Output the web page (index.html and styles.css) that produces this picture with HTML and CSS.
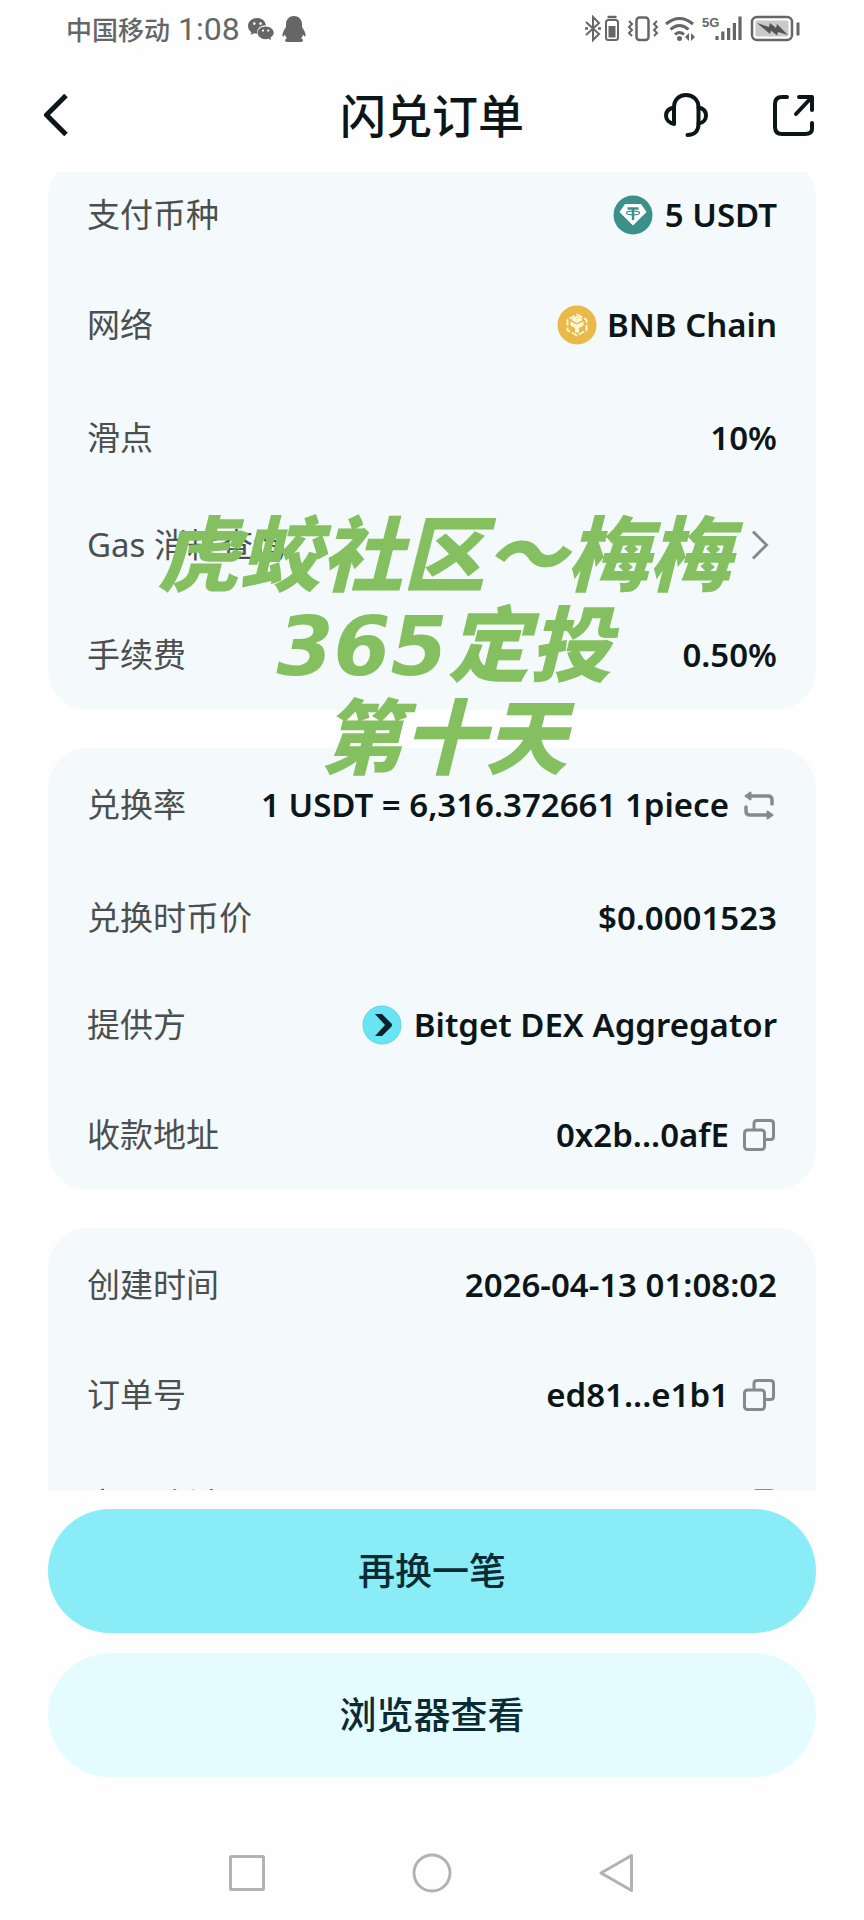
FILE: index.html
```html
<!DOCTYPE html>
<html lang="zh-CN">
<head>
<meta charset="utf-8">
<meta name="viewport" content="width=device-width, initial-scale=1">
<title>闪兑订单</title>
<link rel="stylesheet" href="styles.css">
</head>
<body>
<svg class="sprite" aria-hidden="true">
  <symbol id="copy" viewBox="0 0 32 32">
    <g fill="none" stroke="currentColor" stroke-width="3">
      <rect x="1.5" y="11" width="20" height="19.5" rx="3"/>
      <path d="M11 11V4.500q0-3 3-3h13.500q3 0 3 3v13q0 3-3 3h-6"/>
    </g>
  </symbol>
</svg>
<div class="screen">
  <div class="status">
    <div class="status-side">
      <span class="carrier">中国移动</span>
      <span class="clock">1:08</span>
      <svg class="wechat" width="26" height="22" viewBox="0 0 26 22">
        <path fill="#666" d="M9.500 0C4.200 0 0 3.600 0 8c0 2.500 1.300 4.700 3.400 6.200L2.600 17l3.300-1.700c1.100.3 2 .5 3.300.5-.9-4.700 3-8.600 8.800-8.600C17.200 3 13.700 0 9.500 0z"/>
        <path fill="#666" d="M17.600 8.400c-4.600 0-8 2.900-8 6.400s3.400 6.400 8 6.400c1 0 1.900-.1 2.800-.4l2.600 1.200-.6-2.300c2-1.300 3.300-3 3.300-4.900 0-3.500-3.500-6.400-8.100-6.400z"/>
        <g fill="#fff"><circle cx="6.300" cy="5.600" r="1.300"/><circle cx="12.500" cy="5.600" r="1.300"/><circle cx="15" cy="12.600" r="1.100"/><circle cx="20.200" cy="12.600" r="1.100"/></g>
      </svg>
      <svg class="qq" width="24" height="26" viewBox="0 0 24 26">
        <path fill="#666" d="M12 0c4.500 0 8 3.400 8 8v3c1.800 2.600 3.600 5.800 3.600 8.400 0 1.600-1 1.400-2.600-1-.4 1.700-1 2.800-2 3.900 1.300.7 2 1.300 2 2.100 0 1.200-1.800 1.600-4.400 1.600H7.400C4.800 26 3 25.600 3 24.400c0-.8.700-1.400 2-2.100-1-1.100-1.600-2.200-2-3.900-1.600 2.400-2.600 2.600-2.600 1C.4 16.800 2.200 13.600 4 11V8c0-4.600 3.500-8 8-8z"/>
      </svg>
    </div>
    <svg class="status-icons" width="216" height="28" viewBox="0 0 216 28" fill="none" stroke="#666" stroke-width="2">
      <path d="M2 7l13 12-6 6V2l6 6L2 20"/>
      <path d="M1 13.500h3M14 13.500h3" stroke-width="2.500"/>
      <rect x="22" y="5" width="12" height="20" rx="2.500"/>
      <path d="M23.500 2h9" stroke-width="2.500"/>
      <rect x="24.500" y="11" width="7" height="11.500" fill="#666" stroke="none"/>
      <rect x="52.500" y="2.500" width="12" height="22.500" rx="3" stroke-width="2.500"/>
      <path d="M45 6l3 3-3 3 3 3-3 3 3 3M73 6l-3 3 3 3-3 3 3 3-3 3"/>
      <g stroke-width="3"><path d="M82 9q13.500-11 27 0M86.500 14.500q9-8 18 0M91 19.500q4.500-4 9 0"/></g>
      <circle cx="95.500" cy="23.500" r="2.500" fill="#666" stroke="none"/>
      <path d="M105 18l-4 4 4 4zM107 18l4 4-4 4z" fill="#666" stroke="none"/>
      <text class="net" x="118" y="12">5G</text>
      <g stroke-width="3.200"><path d="M133 25v-4M138.800 25v-8.500M144.600 25V13M150.400 25V8M156 25V1.500"/></g>
      <rect x="168" y="2" width="40" height="23" rx="5" stroke-width="2.500"/>
      <rect x="171.500" y="5.500" width="33" height="16" rx="2" fill="#c9c9c9" stroke="none"/>
      <path d="M173 8l12 4 1-4 6 5 1-4 11 11-10-3-1 3.500-6-5-1 3.500z" fill="#555" stroke="none"/>
      <path d="M214 7.500v13" stroke-width="3"/>
    </svg>
  </div>
  <header class="header">
    <button class="icon-button" type="button" aria-label="返回">
      <svg width="24" height="42" viewBox="0 0 24 42" fill="none" stroke="#0c1618" stroke-width="5"><path d="M22 1.500L2.500 21 22 40.500"/></svg>
    </button>
    <h1 class="title">闪兑订单</h1>
    <div class="header-actions">
      <button class="icon-button" type="button" aria-label="客服">
        <svg width="44" height="44" viewBox="0 0 44 44" fill="none" stroke="#0c1618" stroke-width="4" stroke-linecap="round" stroke-linejoin="round"><path d="M10 31V14.500C10 7 15 2 22 2s12.500 5 12.500 12.500V31c0 7-4 11-11 11"/><path d="M10 14.500C5 15.500 2 18.500 2 22.500s3 7.500 8 8M34.500 14.500c5 1 7.500 4 7.500 8s-2.500 7.500-7.500 8"/></svg>
      </button>
      <button class="icon-button" type="button" aria-label="分享">
        <svg width="42" height="42" viewBox="0 0 42 42" fill="none" stroke="#0c1618" stroke-width="4" stroke-linecap="round" stroke-linejoin="round"><path d="M15 3h-5q-7 0-7 7v23q0 7 7 7h23q7 0 7-5v-6"/><path d="M27 3h13v13M39 4L24 20"/></svg>
      </button>
    </div>
  </header>
  <main class="content">
    <div class="cards">
      <dl class="card">
        <div class="row"><dt>支付币种</dt><dd>
          <svg class="token" width="40" height="40" viewBox="0 0 40 40"><circle cx="20" cy="20" r="19.500" fill="#3c908a"/><path d="M12 9h16l5.500 8L20 30.500 6.500 17z" fill="#fff"/><path d="M14.500 13.500h11M20 13.500V25" stroke="#3c908a" stroke-width="2.400"/><ellipse cx="20" cy="18" rx="6.500" ry="1.800" fill="none" stroke="#3c908a" stroke-width="1.200"/></svg>
          <span>5 USDT</span></dd></div>
        <div class="row"><dt>网络</dt><dd class="tight">
          <svg class="token" width="40" height="40" viewBox="0 0 40 40"><circle cx="20" cy="20" r="19.500" fill="#e9b949"/><g fill="none" stroke="#fff8dc" stroke-width="1.800"><path d="M20 9.500l9.500 5.200v10.600L20 30.500l-9.500-5.200V14.700z" stroke-dasharray="6 2"/><path d="M15 14.500l5 2.500 5-2.500M20 12l3 1.500-3 1.500-3-1.500z"/></g><path d="M13.500 16.500l6.500 3 6.500-3v4l-4.500 2.500v4.500h-4V23l-4.500-2.500z" fill="#fff8dc"/></svg>
          <span>BNB Chain</span></dd></div>
        <div class="row row-text"><dt>滑点</dt><dd><span>10%</span></dd></div>
        <div class="row"><dt>Gas 消耗查询</dt><dd>
          <a class="more" href="#gas" aria-label="Gas 消耗查询"><svg width="18" height="30" viewBox="0 0 18 30" fill="none" stroke="#858a8b" stroke-width="3"><path d="M2 1.500L15.500 15 2 28.500"/></svg></a></dd></div>
        <div class="row"><dt>手续费</dt><dd><span>0.50%</span></dd></div>
      </dl>
      <dl class="card">
        <div class="row"><dt>兑换率</dt><dd class="with-action"><span>1 USDT = 6,316.372661 1piece</span>
          <button class="icon-button muted" type="button" aria-label="切换"><svg width="32" height="32" viewBox="0 0 32 32" fill="none" stroke="currentColor" stroke-width="3.500" stroke-linecap="round"><path d="M7 7h18q4 0 4 4v4M25 26H7q-4 0-4-4v-4"/><path d="M7.500 3.500L2.500 7l5 3.500zM24.500 22.500l5 3.500-5 3.500z" fill="currentColor" stroke-width="2" stroke-linejoin="round"/></svg></button></dd></div>
        <div class="row row-text"><dt>兑换时币价</dt><dd><span>$0.0001523</span></dd></div>
        <div class="row"><dt>提供方</dt><dd>
          <svg class="token" width="40" height="40" viewBox="0 0 40 40"><circle cx="20" cy="20" r="19" fill="#69e4f3" stroke="#5fd5e2"/><path d="M13 9h7l9.500 9.500q1 1.500 0 3L20 31h-7l10-11z" fill="#0b2029"/></svg>
          <span>Bitget DEX Aggregator</span></dd></div>
        <div class="row"><dt>收款地址</dt><dd class="with-action"><span>0x2b...0afE</span>
          <button class="icon-button muted" type="button" aria-label="复制收款地址"><svg width="32" height="32"><use href="#copy"/></svg></button></dd></div>
      </dl>
      <dl class="card">
        <div class="row"><dt>创建时间</dt><dd><span>2026-04-13 01:08:02</span></dd></div>
        <div class="row"><dt>订单号</dt><dd class="with-action"><span>ed81...e1b1</span>
          <button class="icon-button muted" type="button" aria-label="复制订单号"><svg width="32" height="32"><use href="#copy"/></svg></button></dd></div>
        <div class="row"><dt>交易哈希</dt><dd class="with-action"><span>0xc2...ffca</span>
          <button class="icon-button muted" type="button" aria-label="复制交易哈希"><svg width="32" height="32"><use href="#copy"/></svg></button></dd></div>
      </dl>
    </div>
  </main>
  <footer class="actions">
    <button class="button primary" type="button">再换一笔</button>
    <button class="button secondary" type="button">浏览器查看</button>
  </footer>
  <nav class="system-nav" aria-label="系统导航">
    <button class="icon-button" type="button" aria-label="最近任务"><svg width="40" height="40" viewBox="0 0 40 40" fill="none" stroke="#b2b2b2" stroke-width="3"><rect x="3.500" y="3.500" width="33" height="33" rx="1"/></svg></button>
    <button class="icon-button" type="button" aria-label="主屏幕"><svg width="40" height="40" viewBox="0 0 40 40" fill="none" stroke="#b2b2b2" stroke-width="3"><circle cx="20" cy="20" r="18"/></svg></button>
    <button class="icon-button" type="button" aria-label="返回上一级"><svg width="40" height="40" viewBox="0 0 40 40" fill="none" stroke="#b2b2b2" stroke-width="3" stroke-linejoin="round"><path d="M34.500 2.500v35L4 20z"/></svg></button>
  </nav>
  <p class="watermark">虎蛟社区～梅梅<br><span class="watermark-number">365</span>定投<br>第十天</p>
</div>
</body>
</html>
```

FILE: styles.css
```css
* {
  box-sizing: border-box;
}

body {
  margin: 0;
  background: #fefefe;
  color: #0c1618;
  font-family: "Noto Sans", "Noto Sans CJK SC", sans-serif;
}

h1,
p,
dl,
dt,
dd {
  margin: 0;
}

.sprite {
  position: absolute;
  width: 0;
  height: 0;
}

.screen {
  position: relative;
  display: flex;
  flex-direction: column;
  height: 100vh;
  overflow: hidden;
}

.status {
  display: flex;
  flex: none;
  align-items: center;
  justify-content: space-between;
  height: 58px;
  padding: 0 64px 0 66px;
  color: #666;
}

.status-side {
  display: flex;
  align-items: center;
  gap: 8px;
}

.carrier {
  font-family: "Noto Sans CJK SC", sans-serif;
  font-size: 26px;
  font-weight: 500;
  line-height: 32px;
}

.clock {
  font-family: Roboto, sans-serif;
  font-size: 32px;
  line-height: 32px;
}

.net {
  fill: #666;
  stroke: none;
  font: 700 13px "Liberation Sans", sans-serif;
}

.header {
  display: grid;
  flex: none;
  grid-template-columns: 1fr auto 1fr;
  align-items: center;
  height: 114px;
  padding: 0 44px;
}

.title {
  padding-bottom: 5px;
  font-family: "Noto Sans CJK SC", sans-serif;
  font-size: 46px;
  font-weight: 500;
  line-height: 56px;
}

.header-actions {
  display: flex;
  align-items: center;
  justify-content: flex-end;
  gap: 64px;
  padding-right: 6px;
}

.icon-button {
  display: flex;
  justify-self: start;
  padding: 0;
  border: 0;
  background: none;
  color: inherit;
}

.muted {
  color: #858a8b;
}

.content {
  flex: 1;
  min-height: 0;
  overflow: hidden;
}

.cards {
  display: flex;
  flex-direction: column;
  gap: 38px;
  margin-top: -14px;
  padding: 0 48px;
}

.card {
  padding: 2px 39px 0;
  border-radius: 40px;
  background: #f4f9fb;
}

.row {
  display: flex;
  align-items: center;
  justify-content: space-between;
  height: 110px;
}

.row-text {
  padding-top: 6px;
}

.row dt {
  color: #4b4f50;
  font-size: 33px;
  line-height: 40px;
}

.row dd {
  display: flex;
  align-items: center;
  gap: 12px;
  font-size: 33px;
  font-weight: 600;
  line-height: 40px;
}

.row .tight {
  gap: 10px;
}

.row .with-action {
  gap: 14px;
  padding-right: 2px;
}

.more {
  display: flex;
  padding-right: 8px;
}

.actions {
  display: flex;
  flex: none;
  flex-direction: column;
  gap: 20px;
  padding: 19px 48px 0;
}

.button {
  height: 124px;
  padding: 0 0 5px;
  border: 0;
  border-radius: 62px;
  color: #0b2b33;
  font-family: "Noto Sans CJK SC", sans-serif;
  font-size: 37px;
  font-weight: 500;
}

.primary {
  background: #8aecf7;
}

.secondary {
  background: #e4fcff;
}

.system-nav {
  display: flex;
  flex: none;
  justify-content: center;
  gap: 145px;
  height: 143px;
  padding-top: 76px;
}

.watermark {
  position: absolute;
  top: 505px;
  right: 0;
  left: 24px;
  color: #84c060;
  font-family: "Noto Sans CJK SC", sans-serif;
  font-size: 82px;
  font-style: italic;
  font-weight: 900;
  line-height: 90px;
  text-align: center;
  pointer-events: none;
}

.watermark-number {
  font-family: "DejaVu Sans", sans-serif;
  line-height: 1;
}
```
